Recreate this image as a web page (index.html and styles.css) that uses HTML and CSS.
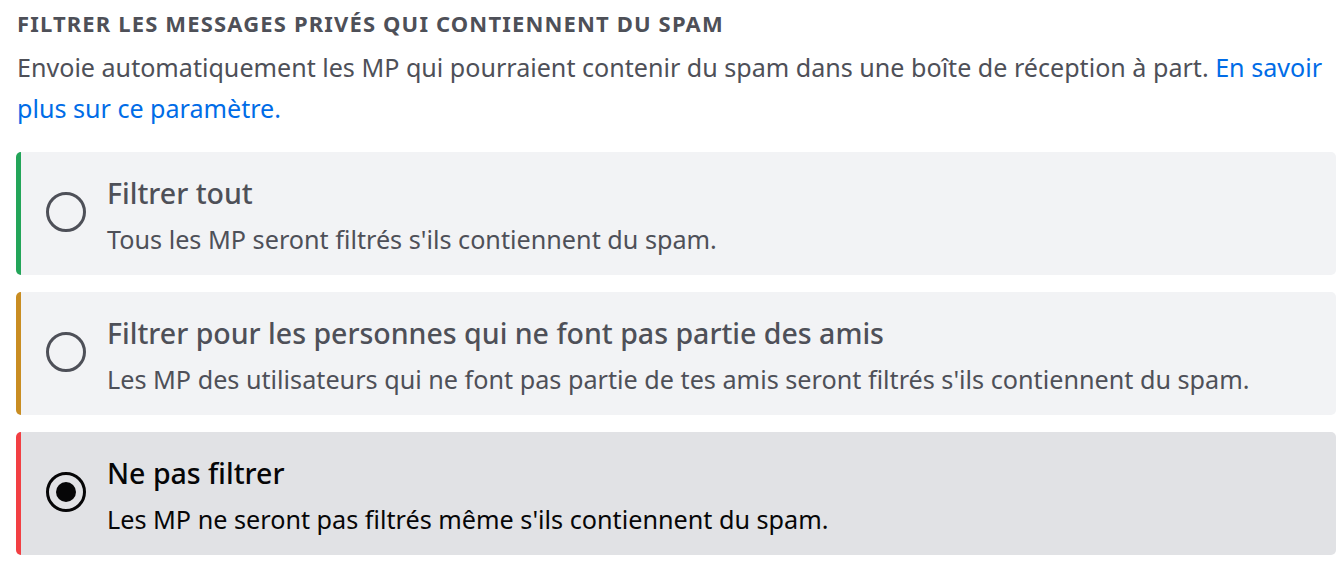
FILE: index.html
```html
<!DOCTYPE html>
<html lang="fr">
<head>
<meta charset="utf-8">
<title>Filtrer les messages privés</title>
<link rel="stylesheet" href="styles.css">
</head>
<body>
<section class="setting">
  <h2 class="heading">Filtrer les messages privés qui contiennent du spam</h2>
  <p class="desc">Envoie automatiquement les MP qui pourraient contenir du spam dans une boîte de réception à part. <a class="link" href="#">En savoir plus sur ce paramètre.</a></p>
  <div class="options">
    <div class="option option-green">
      <span class="radio"></span>
      <div class="text">
        <div class="title">Filtrer tout</div>
        <div class="sub">Tous les MP seront filtrés s'ils contiennent du spam.</div>
      </div>
    </div>
    <div class="option option-yellow">
      <span class="radio"></span>
      <div class="text">
        <div class="title">Filtrer pour les personnes qui ne font pas partie des amis</div>
        <div class="sub">Les MP des utilisateurs qui ne font pas partie de tes amis seront filtrés s'ils contiennent du spam.</div>
      </div>
    </div>
    <div class="option option-red selected">
      <span class="radio"></span>
      <div class="text">
        <div class="title">Ne pas filtrer</div>
        <div class="sub">Les MP ne seront pas filtrés même s'ils contiennent du spam.</div>
      </div>
    </div>
  </div>
</section>
</body>
</html>
```

FILE: styles.css
```css
html, body {
  margin: 0;
  padding: 0;
  background: #ffffff;
}

body {
  font-family: "Noto Sans", "Open Sans", sans-serif;
  color: #4e5058;
}

.setting {
  padding: 11px 8px 0 16px;
}

.heading {
  margin: 0 0 0 1px;
  font-size: 22px;
  line-height: 24px;
  font-weight: 700;
  letter-spacing: 1.15px;
  text-transform: uppercase;
  color: #4e5058;
}

.desc {
  margin: 12px 0 23px 1px;
  font-size: 25.1px;
  line-height: 41px;
  color: #4e5058;
}

.link {
  color: #006ce7;
  text-decoration: none;
}

.options {
  display: flex;
  flex-direction: column;
  gap: 17px;
}

.option {
  display: flex;
  align-items: center;
  gap: 21px;
  height: 123px;
  box-sizing: border-box;
  padding: 22px 16px 20px 25px;
  background: #f2f3f5;
  border-left: 5px solid #23a559;
  border-radius: 5px;
}

.option-green { border-left-color: #23a559; }
.option-yellow { border-left-color: #c98d22; }
.option-red { border-left-color: #f23f43; }

.option.selected {
  background: #e1e2e5;
}

.radio {
  flex: none;
  width: 40px;
  height: 40px;
  box-sizing: border-box;
  border: 3.5px solid #4e5058;
  border-radius: 50%;
  position: relative;
  margin-top: -6px;
}

.selected .radio {
  border-color: #060607;
}

.selected .radio::after {
  content: "";
  position: absolute;
  left: 50%;
  top: 50%;
  width: 20px;
  height: 20px;
  margin: -10px 0 0 -10px;
  border-radius: 50%;
  background: #060607;
}

.text {
  display: flex;
  flex-direction: column;
  gap: 11px;
}

.title {
  font-size: 28.5px;
  line-height: 38px;
  font-weight: 500;
  color: #4e5058;
}

.selected .title {
  color: #060607;
}

.sub {
  font-size: 25.2px;
  line-height: 32px;
  color: #4e5058;
}

.selected .sub {
  color: #060607;
}
```
